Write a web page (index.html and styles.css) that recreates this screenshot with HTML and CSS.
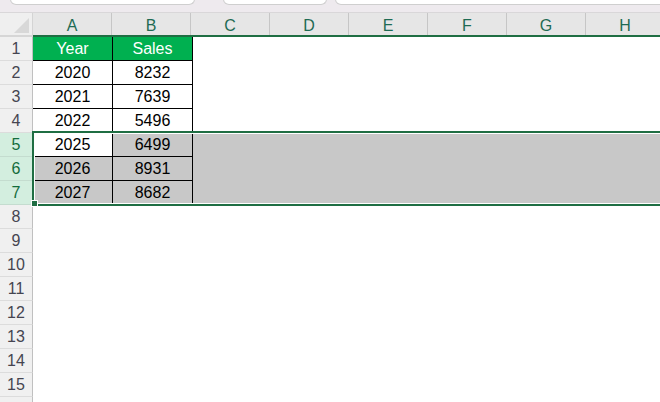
FILE: index.html
```html
<!DOCTYPE html>
<html>
<head>
<meta charset="utf-8">
<link rel="stylesheet" href="styles.css">
</head>
<body>
<div class="tabs">
  <div class="tab tab1"></div>
  <div class="tab tab2"></div>
  <div class="tab tab3"></div>
</div>
<div class="sheet">
  <div class="row colhead">
    <div class="corner"><span class="tri"></span></div>
    <div class="ch">A</div><div class="ch">B</div><div class="ch">C</div><div class="ch">D</div>
    <div class="ch">E</div><div class="ch">F</div><div class="ch">G</div><div class="ch">H</div>
  </div>
  <div class="row">
    <div class="rh">1</div>
    <div class="c b hd">Year</div><div class="c b hd">Sales</div>
    <div class="c"></div><div class="c"></div><div class="c"></div><div class="c"></div><div class="c"></div><div class="c"></div>
  </div>
  <div class="row">
    <div class="rh">2</div>
    <div class="c b">2020</div><div class="c b">8232</div>
    <div class="c"></div><div class="c"></div><div class="c"></div><div class="c"></div><div class="c"></div><div class="c"></div>
  </div>
  <div class="row">
    <div class="rh">3</div>
    <div class="c b">2021</div><div class="c b">7639</div>
    <div class="c"></div><div class="c"></div><div class="c"></div><div class="c"></div><div class="c"></div><div class="c"></div>
  </div>
  <div class="row">
    <div class="rh">4</div>
    <div class="c b">2022</div><div class="c b">5496</div>
    <div class="c"></div><div class="c"></div><div class="c"></div><div class="c"></div><div class="c"></div><div class="c"></div>
  </div>
  <div class="row">
    <div class="rh sel">5</div>
    <div class="c b">2025</div><div class="c b g">6499</div>
    <div class="c g"></div><div class="c g"></div><div class="c g"></div><div class="c g"></div><div class="c g"></div><div class="c g"></div>
  </div>
  <div class="row">
    <div class="rh sel">6</div>
    <div class="c b g">2026</div><div class="c b g">8931</div>
    <div class="c g"></div><div class="c g"></div><div class="c g"></div><div class="c g"></div><div class="c g"></div><div class="c g"></div>
  </div>
  <div class="row">
    <div class="rh sel">7</div>
    <div class="c b g">2027</div><div class="c b g">8682</div>
    <div class="c g"></div><div class="c g"></div><div class="c g"></div><div class="c g"></div><div class="c g"></div><div class="c g"></div>
  </div>
  <div class="row"><div class="rh">8</div></div>
  <div class="row"><div class="rh">9</div></div>
  <div class="row"><div class="rh">10</div></div>
  <div class="row"><div class="rh">11</div></div>
  <div class="row"><div class="rh">12</div></div>
  <div class="row"><div class="rh">13</div></div>
  <div class="row"><div class="rh">14</div></div>
  <div class="row"><div class="rh">15</div></div>
  <div class="row"><div class="rh"></div></div>
  <div class="selection"></div>
  <div class="handle"></div>
</div>
</body>
</html>
```
FILE: styles.css
```css
html, body {
  margin: 0;
  padding: 0;
  width: 660px;
  height: 402px;
  overflow: hidden;
  background: #ffffff;
  font-family: "Liberation Sans", Arial, sans-serif;
  font-size: 16px;
}

.tabs {
  display: flex;
  height: 12px;
  background: #eeeaee;
  border-bottom: 1px solid #d9d7d9;
  overflow: hidden;
}

.tab {
  height: 10px;
  margin-top: -6px;
  background: #ffffff;
  border: 1px solid #cfcfcf;
  border-top: none;
  border-radius: 0 0 6px 6px;
  flex: none;
}

.tab1 { margin-left: 10px; width: 183px; }
.tab2 { margin-left: 28px; width: 102px; }
.tab3 { margin-left: 8px; flex: 1; margin-right: -20px; }

.sheet {
  position: relative;
}

.row {
  display: flex;
  height: 24px;
}

.colhead {
  height: 22px;
  background: #e6e6e6;
  border-bottom: 2px solid #1f6e43;
}

.corner {
  width: 32px;
  height: 22px;
  flex: none;
  background: #efefef;
  border-right: 1px solid #d4d4d4;
  position: relative;
  box-shadow: 0 2px 0 #d6d6d6;
}

.tri {
  position: absolute;
  right: 3px;
  bottom: 2px;
  width: 0;
  height: 0;
  border-left: 15px solid transparent;
  border-bottom: 15px solid #d8d8d8;
}

.ch {
  width: 79px;
  flex: none;
  border-right: 1px solid #c6c6c6;
  text-align: center;
  line-height: 22px;
  padding-top: 2px;
  box-sizing: border-box;
  height: 22px;
  color: #1e6b54;
}

.rh {
  width: 32px;
  height: 23px;
  flex: none;
  background: #f0f0f0;
  border-right: 1px solid #c0c0c0;
  border-bottom: 1px solid #dcdcdc;
  text-align: center;
  line-height: 24px;
  color: #454550;
}

.rh.sel {
  background: #d3eedf;
  color: #136c3c;
  border-bottom-color: #c4dccf;
}

.c {
  width: 79px;
  height: 23px;
  flex: none;
  border-right: 1px solid transparent;
  border-bottom: 1px solid transparent;
  text-align: center;
  line-height: 24px;
  color: #000000;
}

.c.b {
  border-right-color: #000000;
  border-bottom-color: #000000;
}

.c.g {
  background: #c8c8c8;
}

.c.hd {
  background: #00b050;
  color: #ffffff;
}

.selection {
  position: absolute;
  left: 32px;
  top: 118px;
  right: -10px;
  height: 71px;
  border: 2px solid #1f6e43;
  box-shadow: inset 0 0 0 1px #ffffff;
  pointer-events: none;
}

.handle {
  position: absolute;
  left: 31px;
  top: 187px;
  width: 5px;
  height: 5px;
  background: #1f6e43;
  border: 1px solid #ffffff;
}
```
